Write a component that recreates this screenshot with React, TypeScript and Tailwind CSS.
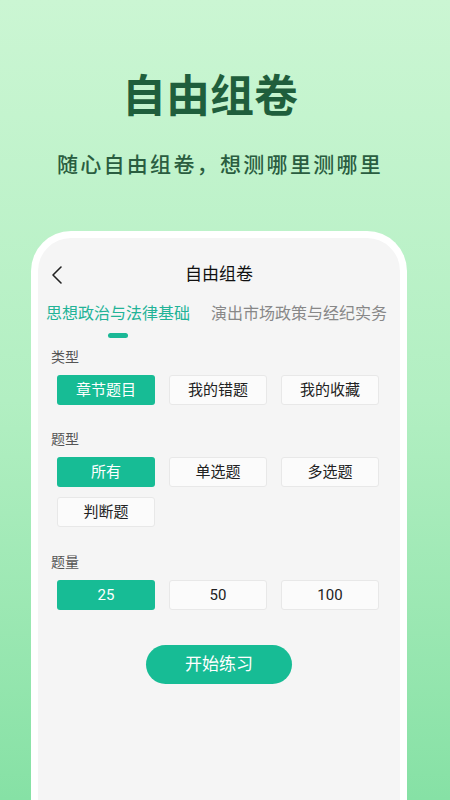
import React, { useState } from 'react';

const font = { fontFamily: 'Roboto, "Noto Sans CJK SC", sans-serif' };

const typeOptions = ['章节题目', '我的错题', '我的收藏'];
const kindOptions = ['所有', '单选题', '多选题', '判断题'];
const countOptions = ['25', '50', '100'];

function OptionGrid({
  options,
  selected,
  onSelect,
}: {
  options: string[];
  selected: string;
  onSelect: (v: string) => void;
}) {
  return (
    <div className="grid grid-cols-[98px_98px_98px] gap-x-[14px] gap-y-[10px] pl-[19px] mt-[8px]">
      {options.map((opt) => {
        const active = opt === selected;
        return (
          <button
            key={opt}
            onClick={() => onSelect(opt)}
            className={
              active
                ? 'h-[30px] rounded-[3px] bg-[#17bc95] text-white text-[15px] flex items-center justify-center'
                : 'h-[30px] rounded-[3px] bg-[#fbfbfb] border border-[#e8e8e8] text-[#222] text-[15px] flex items-center justify-center'
            }
          >
            {opt}
          </button>
        );
      })}
    </div>
  );
}

export default function App() {
  const [tab, setTab] = useState(0);
  const [type, setType] = useState('章节题目');
  const [kind, setKind] = useState('所有');
  const [count, setCount] = useState('25');

  const tabs = ['思想政治与法律基础', '演出市场政策与经纪实务'];

  return (
    <div
      className="w-[450px] h-[800px] overflow-hidden flex flex-col bg-gradient-to-b from-[#cbf6d3] via-[#b2efc2] to-[#86e1a5]"
      style={font}
    >
      {/* Hero */}
      <div className="pt-[71px] pr-[30px] text-center text-[44px] leading-[52px] font-semibold text-[#1f5e3c]">
        自由组卷
      </div>
      <div className="mt-[28px] pl-[2px] pr-[12px] text-center text-[21px] leading-[28px] tracking-[2.3px] text-[#2a5d40] font-medium">
        随心自由组卷，想测哪里测哪里
      </div>

      {/* Phone frame */}
      <div className="mt-[52px] ml-[31px] mr-[43px] flex-1 rounded-t-[40px] border-[7px] border-b-0 border-white bg-[#f5f5f5] overflow-hidden">
        {/* Header */}
        <div className="mt-[24px] h-[26px] grid grid-cols-[1fr_auto_1fr] items-center">
          <div className="pl-[13px] flex items-center">
            <svg width="12" height="20" viewBox="0 0 12 20" fill="none">
              <path d="M10 2 L2 10 L10 18" stroke="#222" strokeWidth="1.6" strokeLinecap="round" strokeLinejoin="round" />
            </svg>
          </div>
          <div className="text-[17px] text-[#111]">自由组卷</div>
          <div />
        </div>

        {/* Tabs */}
        <div className="mt-[14px] pl-[8px] flex gap-[21px] whitespace-nowrap">
          {tabs.map((t, i) => (
            <button key={t} onClick={() => setTab(i)} className="flex flex-col items-center">
              <span
                className={
                  i === tab
                    ? 'text-[16px] leading-[24px] text-[#22b397]'
                    : 'text-[16px] leading-[24px] text-[#888]'
                }
              >
                {t}
              </span>
              <span
                className={
                  i === tab
                    ? 'mt-[7px] w-[20px] h-[5px] rounded-full bg-[#1ab896]'
                    : 'mt-[7px] w-[20px] h-[5px] rounded-full bg-transparent'
                }
              />
            </button>
          ))}
        </div>

        {/* 类型 */}
        <div className="mt-[9px] pl-[13px] text-[14px] leading-[20px] text-[#555]">类型</div>
        <OptionGrid options={typeOptions} selected={type} onSelect={setType} />

        {/* 题型 */}
        <div className="mt-[24px] pl-[13px] text-[14px] leading-[20px] text-[#555]">题型</div>
        <OptionGrid options={kindOptions} selected={kind} onSelect={setKind} />

        {/* 题量 */}
        <div className="mt-[25px] pl-[13px] text-[14px] leading-[20px] text-[#555]">题量</div>
        <OptionGrid options={countOptions} selected={count} onSelect={setCount} />

        {/* Start */}
        <div className="mt-[35px] flex justify-center">
          <button className="w-[146px] h-[39px] rounded-full bg-[#17bc95] text-white text-[17px]">
            开始练习
          </button>
        </div>
      </div>
    </div>
  );
}
